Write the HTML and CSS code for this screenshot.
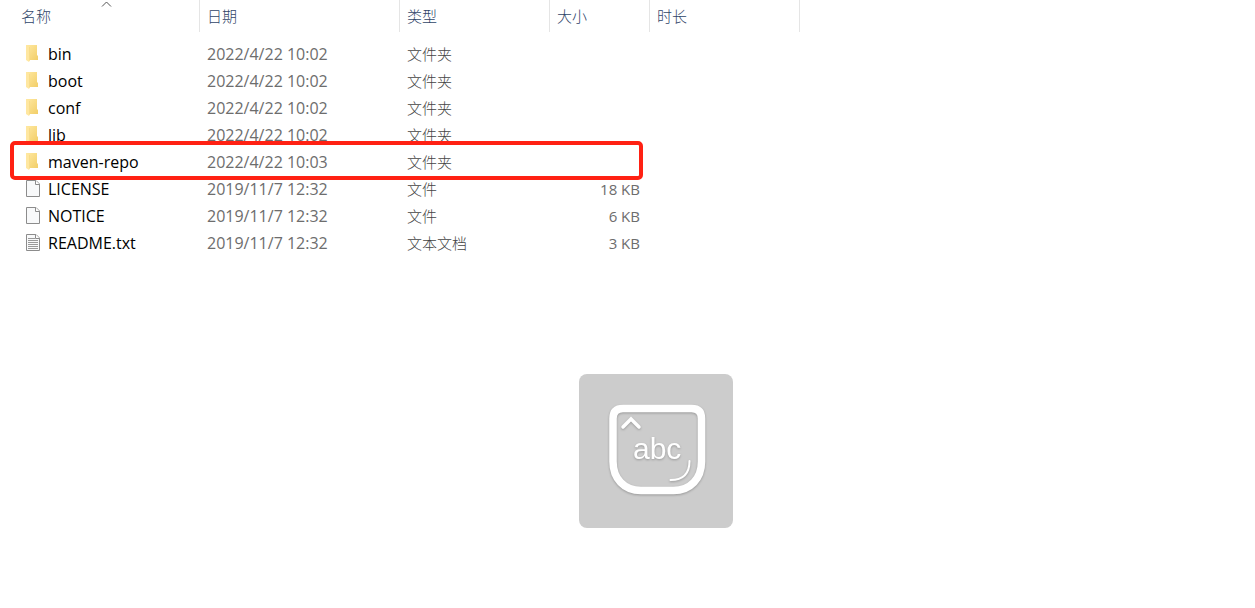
FILE: index.html
```
<!DOCTYPE html>
<html lang="zh-CN">
<head>
    <meta charset="UTF-8">
    <meta name="viewport" content="width=device-width, initial-scale=1.0">
    <title>maven</title>
    <link rel="stylesheet" href="styles.css">
</head>
<body>
    <!-- shared icons -->
    <svg class="sprite" aria-hidden="true">
        <linearGradient id="folderBack" x1="0" x2="1" y1="0" y2="1">
            <stop offset="0" stop-color="#ffe9a2"/>
            <stop offset="1" stop-color="#f2ce68"/>
        </linearGradient>
        <symbol id="folder" viewBox="0 0 16 18">
            <path d="M1 0h11v10l1 1v4H1z" fill="url(#folderBack)"/>
            <path d="M1 0l4 2v13l-1 2-3-2z" fill="#ffe7a0"/>
            <path d="M4 2h1v13l-1 1z" fill="#f8dc8a"/>
        </symbol>
        <symbol id="file" viewBox="0 0 16 18">
            <path d="M1.500 .5h9.500l3.500 3.500v12.500h-13z" fill="#f8f9fa" stroke="#8c8c8c"/>
            <path d="M10.500 .5v4h4" fill="#fff" stroke="#8c8c8c"/>
        </symbol>
        <symbol id="text" viewBox="0 0 16 18">
            <use href="#file"/>
            <path d="M3 4.500h7M3 6.500h10M3 8.500h10M3 10.500h10M3 12.500h10M3 14.500h10" stroke="#999"/>
        </symbol>
    </svg>

    <table class="files">
        <colgroup>
            <col class="col-name">
            <col class="col-date">
            <col class="col-type">
            <col class="col-size">
            <col class="col-length">
        </colgroup>
        <thead>
            <tr>
                <th class="name">
                    <button type="button">名称</button>
                    <svg class="sort" viewBox="0 0 11 6"><path d="M1 5.500l4.500-4.500 4.500 4.500" fill="none" stroke="#555"/></svg>
                </th>
                <th><button type="button">日期</button></th>
                <th><button type="button">类型</button></th>
                <th><button type="button">大小</button></th>
                <th><button type="button">时长</button></th>
            </tr>
        </thead>
        <tbody>
            <tr>
                <td class="name"><svg class="icon"><use href="#folder"/></svg>bin</td>
                <td>2022/4/22 10:02</td>
                <td class="type">文件夹</td>
                <td class="size"></td>
                <td></td>
            </tr>
            <tr>
                <td class="name"><svg class="icon"><use href="#folder"/></svg>boot</td>
                <td>2022/4/22 10:02</td>
                <td class="type">文件夹</td>
                <td class="size"></td>
                <td></td>
            </tr>
            <tr>
                <td class="name"><svg class="icon"><use href="#folder"/></svg>conf</td>
                <td>2022/4/22 10:02</td>
                <td class="type">文件夹</td>
                <td class="size"></td>
                <td></td>
            </tr>
            <tr>
                <td class="name"><svg class="icon"><use href="#folder"/></svg>lib</td>
                <td>2022/4/22 10:02</td>
                <td class="type">文件夹</td>
                <td class="size"></td>
                <td></td>
            </tr>
            <tr class="marked">
                <td class="name"><svg class="icon"><use href="#folder"/></svg>maven-repo<span class="marker"></span></td>
                <td>2022/4/22 10:03</td>
                <td class="type">文件夹</td>
                <td class="size"></td>
                <td></td>
            </tr>
            <tr>
                <td class="name"><svg class="icon"><use href="#file"/></svg>LICENSE</td>
                <td>2019/11/7 12:32</td>
                <td class="type">文件</td>
                <td class="size">18 KB</td>
                <td></td>
            </tr>
            <tr>
                <td class="name"><svg class="icon"><use href="#file"/></svg>NOTICE</td>
                <td>2019/11/7 12:32</td>
                <td class="type">文件</td>
                <td class="size">6 KB</td>
                <td></td>
            </tr>
            <tr>
                <td class="name"><svg class="icon"><use href="#text"/></svg>README.txt</td>
                <td>2019/11/7 12:32</td>
                <td class="type">文本文档</td>
                <td class="size">3 KB</td>
                <td></td>
            </tr>
        </tbody>
    </table>

    <!-- caps lock indicator -->
    <div class="caps">
        <svg viewBox="0 0 154 154">
            <g class="key">
                <path stroke-width="7.500" d="M44 34.500h68.500q10 0 10 10v43c0 17-11 29-28 29h-32.500c-17 0-28-12-28-29v-43q0-10 10-10z"/>
                <path stroke-width="3.500" d="M44 53l8-8 8 8"/>
                <path stroke-width="2" d="M110.500 87c0 13-6 19-19 19"/>
                <text x="54" y="85">abc</text>
            </g>
        </svg>
    </div>
</body>
</html>
```
FILE: styles.css
```
body {
    margin: 0;
    background: #fff;
    font-family: "Open Sans", "Noto Sans CJK SC", sans-serif;
    font-size: 16px;
    color: #6d6d6d;
}
.sprite {
    position: absolute;
    width: 0;
    height: 0;
}
.files {
    width: 800px;
    table-layout: fixed;
    border-collapse: separate;
    border-spacing: 0;
}
.col-name, .col-date {
    width: 200px;
}
.col-type, .col-length {
    width: 150px;
}
.col-size {
    width: 100px;
}
th {
    height: 32px;
    padding: 0;
    border-right: 1px solid #e5e5e5;
    position: relative;
}
th button {
    display: block;
    width: 100%;
    padding: 0 7px;
    border: none;
    background: none;
    font-family: "Noto Sans CJK SC", sans-serif;
    font-size: 15px;
    font-weight: 300;
    line-height: 32px;
    text-align: left;
    color: #2f4468;
}
th.name button {
    padding-left: 21px;
}
.sort {
    position: absolute;
    top: 1px;
    left: 101px;
    width: 11px;
    height: 6px;
}
tbody::before {
    content: "";
    display: block;
    height: 9px;
}
td {
    box-sizing: border-box;
    height: 27px;
    padding: 0 7px;
    line-height: 27px;
    white-space: nowrap;
}
td.name {
    padding-left: 25px;
    color: #000;
}
td.type {
    padding-bottom: 2px;
    font-family: "Noto Sans CJK SC", sans-serif;
    font-size: 15px;
    font-weight: 300;
    line-height: 25px;
    color: #444;
}
td.size {
    padding-right: 10px;
    font-size: 15px;
    text-align: right;
}
.icon {
    width: 16px;
    height: 18px;
    margin: 4px 7px 0 0;
    vertical-align: top;
}
.marked {
    position: relative;
}
.marker {
    position: absolute;
    top: -8px;
    right: 157px;
    bottom: -4px;
    left: 10px;
    border: 4px solid #ff2113;
    border-radius: 5px;
}
.caps {
    position: absolute;
    top: 374px;
    left: 579px;
    width: 154px;
    height: 154px;
    border-radius: 8px;
    background: #ccc;
}
.caps svg {
    display: block;
}
.key {
    filter: drop-shadow(0 1px 1px rgba(0, 0, 0, 0.25));
}
.key path {
    fill: none;
    stroke: #fff;
    stroke-linecap: round;
}
.key text {
    fill: #fff;
    font-family: "Liberation Sans", Arial, sans-serif;
    font-size: 30px;
}
```
